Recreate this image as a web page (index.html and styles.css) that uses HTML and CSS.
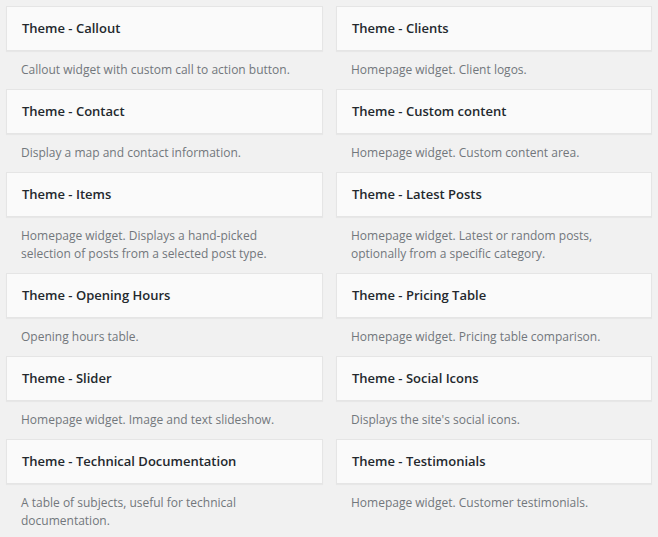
FILE: index.html
```html
<!DOCTYPE html>
<html>
<head>
<meta charset="utf-8">
<link rel="stylesheet" href="styles.css">
</head>
<body>
<div class="widgets">
  <div class="widget"><div class="widget-top"><h3>Theme - Callout</h3></div><div class="widget-description">Callout widget with custom call to action button.</div></div>
  <div class="widget"><div class="widget-top"><h3>Theme - Clients</h3></div><div class="widget-description">Homepage widget. Client logos.</div></div>
  <div class="widget"><div class="widget-top"><h3>Theme - Contact</h3></div><div class="widget-description">Display a map and contact information.</div></div>
  <div class="widget"><div class="widget-top"><h3>Theme - Custom content</h3></div><div class="widget-description">Homepage widget. Custom content area.</div></div>
  <div class="widget"><div class="widget-top"><h3>Theme - Items</h3></div><div class="widget-description">Homepage widget. Displays a hand-picked selection of posts from a selected post type.</div></div>
  <div class="widget"><div class="widget-top"><h3>Theme - Latest Posts</h3></div><div class="widget-description">Homepage widget. Latest or random posts, optionally from a specific category.</div></div>
  <div class="widget"><div class="widget-top"><h3>Theme - Opening Hours</h3></div><div class="widget-description">Opening hours table.</div></div>
  <div class="widget"><div class="widget-top"><h3>Theme - Pricing Table</h3></div><div class="widget-description">Homepage widget. Pricing table comparison.</div></div>
  <div class="widget"><div class="widget-top"><h3>Theme - Slider</h3></div><div class="widget-description">Homepage widget. Image and text slideshow.</div></div>
  <div class="widget"><div class="widget-top"><h3>Theme - Social Icons</h3></div><div class="widget-description">Displays the site's social icons.</div></div>
  <div class="widget"><div class="widget-top"><h3>Theme - Technical Documentation</h3></div><div class="widget-description">A table of subjects, useful for technical documentation.</div></div>
  <div class="widget"><div class="widget-top"><h3>Theme - Testimonials</h3></div><div class="widget-description">Homepage widget. Customer testimonials.</div></div>
</div>
</body>
</html>
```
FILE: styles.css
```css
html, body {
  margin: 0;
  padding: 0;
  background: #f1f1f1;
}
body {
  font-family: "Open Sans", "Liberation Sans", sans-serif;
  font-size: 13px;
  color: #444;
}
.widgets {
  display: grid;
  grid-template-columns: 317px 316px;
  column-gap: 13px;
  padding: 6px 0 0 6px;
  align-items: start;
}
.widget-top {
  background: #fafafa;
  border: 1px solid #e5e5e5;
  box-shadow: 0 1px 1px rgba(0,0,0,0.04);
}
.widget-top h3 {
  margin: 0;
  padding: 15px;
  font-size: 13px;
  line-height: 13px;
  font-weight: 600;
  color: #23282d;
  white-space: nowrap;
}
.widget-description {
  padding: 10px 22px 10px 15px;
  line-height: 18px;
  color: #72777c;
  font-size: 12px;
}
```
